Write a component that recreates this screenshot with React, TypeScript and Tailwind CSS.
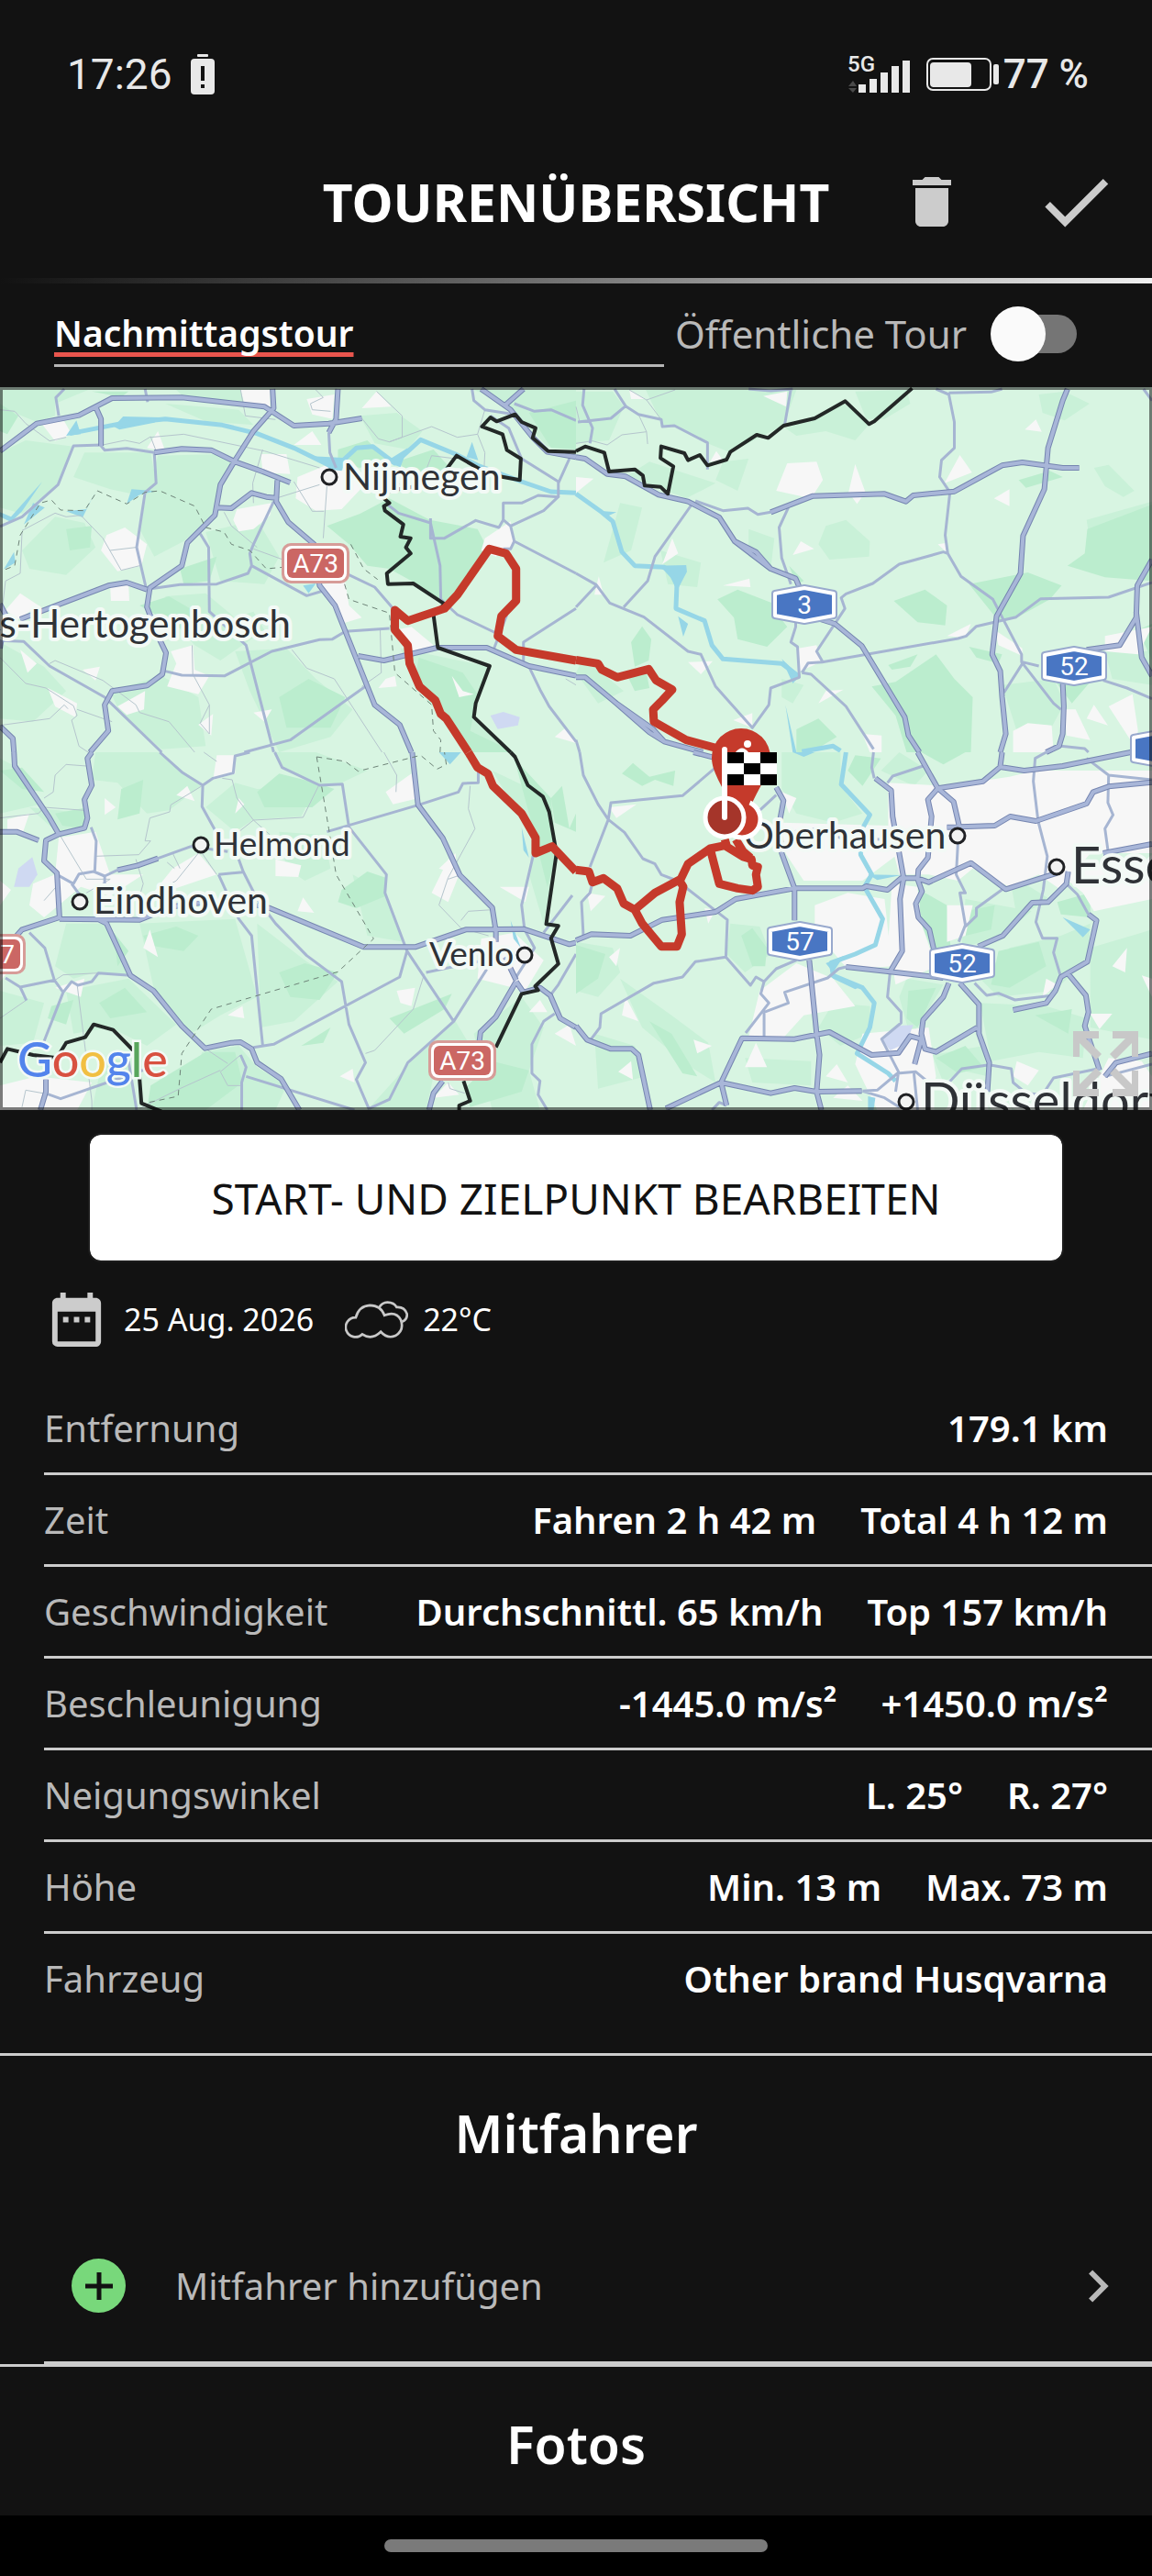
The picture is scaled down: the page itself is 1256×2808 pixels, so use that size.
import { useState } from 'react'
import { MdCheck, MdChevronRight, MdDateRange, MdDelete } from 'react-icons/md'

interface Tile {
  x: number
  y: number
  mid: string
  dark: string
  urban: string
  lake: string
  water: string
  river: string
  minor: string
  roads: string
  motorways: string
  border: string
  dashed: string
}

// Each tile covers 628x400 map units and is drawn on a 1568x1200 grid.
const TILES: Tile[] = [
  {
    x: 0,
    y: 0,
    mid: 'M0 15 240 15 150 60 150 100 100 120 40 90 0 110Z M480 15 730 15 735 70 500 38Z M0 220 70 180 200 200 160 320 60 420 0 400Z M230 220 410 220 425 320 380 360 300 340 200 300Z M430 230 600 225 640 255 600 330 590 420 500 510 420 560 380 470 400 350Z M450 60 650 80 690 130 560 118Z M1290 15 1568 15 1568 200 1490 200 1420 110 1380 60Z M980 100 1080 90 1150 150 1110 210 1020 190Z M450 690 560 680 640 760 690 740 720 800 600 900 530 850 470 770Z M0 840 120 920 180 1000 90 1100 0 1090Z M640 870 780 860 860 960 960 1060 900 1150 760 1200 680 1000Z M1090 860 1330 920 1290 1080 1390 1200 1280 1200 1130 980Z M300 1000 440 950 540 1020 560 1180 440 1190 330 1080Z M60 540 150 430 230 450 260 530 180 620 80 600Z M560 480 700 440 760 560 720 650 600 640Z',
    dark: 'M890 460 980 420 1060 370 1170 440 1300 470 1330 540 1250 680 1200 715 1120 640 1060 600 1000 590 950 520Z M920 210 1000 180 1050 240 980 270 920 255Z M1140 890 1260 940 1300 1010 1280 1130 1400 1200 1290 1200 1200 1060 1130 960Z M1440 90 1568 50 1568 210 1500 205Z M490 600 590 560 570 640 500 650Z M180 470 250 460 245 530 190 540Z M760 1020 840 960 940 1020 900 1120 780 1120Z M250 20 350 20 330 38Z M1080 250 1180 210 1240 290 1130 300Z M0 60 50 100 20 160 0 150Z M380 720 460 690 560 760 500 800Z',
    urban: 'M110 120 175 118 195 160 150 182Z M290 490 340 465 400 520 385 590 320 608 275 540Z M810 300 890 260 985 300 985 335 930 405 860 410 805 370Z M645 405 740 385 735 425 690 470 650 478 635 440Z M1320 500 1390 445 1400 520 1350 560 1310 540Z M465 870 525 850 530 930 570 950 540 1010 455 985 480 910Z M55 680 105 720 50 765 15 735Z M300 655 350 650 352 705 302 705Z M710 225 780 225 790 290 715 285Z M320 1050 395 1000 392 1060 345 1078Z M130 990 210 1040 205 1085 150 1050Z M55 865 100 910 75 940Z M540 1110 580 1075 575 1145Z M870 650 940 645 950 720 985 760 930 780Z M985 75 1025 20 1065 70Z M835 45 910 30 905 110 850 95Z M800 195 850 150 875 195Z M655 15 735 15 735 70 665 60Z M1075 800 1120 790 1180 850 1130 880Z M1050 960 1075 950 1080 985 1030 990Z M225 930 272 920 260 965Z M690 1070 740 1060 720 1100Z M400 205 430 150 450 215Z M1230 950 1260 1000 1290 1010 1250 1020Z M1510 1150 1540 1120 1568 1170Z',
    lake: 'M1335 1080 1370 1068 1415 1085 1410 1112 1355 1124Z',
    water: 'M180 165 208 115 220 160Z M310 135 335 102 440 105 420 122 325 145Z M1285 185 1302 245 1270 235Z M850 232 945 238 930 280 900 275Z M1050 250 1110 205 1090 268Z M0 415 30 430 115 315 60 412 30 447 0 430Z M65 455 90 385 122 400Z M180 412 235 405 262 342 225 432Z M345 388 358 340 425 346 380 358Z M10 602 38 545 42 580Z M825 655 860 648 840 680Z',
    river: 'M190 158 330 125 450 110 605 130 700 158 800 205 890 258 930 250 970 205 1015 200 1075 255 1145 178 1240 225 1300 262 1420 315 1500 348 1568 352',
    minor: 'M0 80 40 85 70 125 135 182 180 170 M655 15 668 100 750 112 M860 15 880 40 845 60 850 80 900 85 M1025 20 1095 100 1095 170 1060 185 1030 175 985 108 M1060 185 1175 135 1245 170 1300 160 1320 80 M1300 160 1320 220 1318 270 M410 170 500 160 720 215 870 270 M280 195 340 180 380 190 410 168 425 215 M60 480 55 615 15 640 5 740 M60 475 150 418 180 430 220 425 280 500 330 605 380 590 M300 540 370 530 M610 415 630 460 700 530 M690 535 770 570 M715 210 688 320 690 385 M890 330 880 500 M750 370 870 325 M800 315 850 412 882 412 M0 890 70 975 125 990 200 1048 210 1080 195 1095 215 1180 240 1200 M135 910 150 900 280 965 370 1045 380 1070 460 1100 530 1200 M525 945 570 1045 545 1105 570 1140 570 1045 M795 865 835 925 910 960 1040 1200 M525 950 523 850 M1035 800 1038 940 985 985 M0 1112 135 1090 175 1045 185 1058 M210 1060 305 1100 M1080 320 1140 340 1175 230 1240 240 M1568 980 1540 960',
    roads: 'M175 12 152 40 160 100 M395 12 402 55 M275 198 285 212 345 206 420 220 425 320 395 350 372 530 398 665 M275 195 200 198 158 325 60 430 0 462 M895 155 898 220 915 270 M545 485 568 530 570 740 670 850 745 1200 M410 665 490 652 590 650 675 615 685 590 835 688 880 672 M745 380 690 520 680 550 685 590 M450 935 495 948 612 950 740 870 870 832 905 830 940 805 1060 795 M0 835 65 838 135 918 285 1020 440 1200 M665 1200 790 1160 1000 980 M1055 390 1085 418 1172 450 1198 590 1200 700 1245 750 1350 810 M1172 435 1172 500 1210 500 1295 442 1358 465 1370 440 1370 385 1420 385 1465 360 1520 365 1520 315 1420 240 1385 140 1335 100 M1370 440 1390 460 1480 410 1522 362 M1390 460 1400 510 1568 615 M1400 510 1390 535 1370 535 M1520 320 1550 240 M1285 12 1290 50 1320 80 1400 95 M1400 60 1455 85 1500 80 1568 115 M1345 860 1380 750 M1425 905 1425 840 1568 730 M1440 920 1470 995 1495 1050 1568 1165 M950 620 1020 660 1070 730',
    motorways: 'M0 215 100 125 215 98 305 42 495 40 720 70 800 132 895 125 985 108 M742 12 745 75 690 150 640 245 600 325 585 425 510 515 495 590 408 662 400 725 430 820 452 875 442 945 400 982 305 1000 285 1045 295 1130 245 1200 M920 12 915 110 895 155 M420 220 495 208 575 212 640 250 715 282 790 318 M755 310 752 380 785 448 855 520 870 655 912 720 1020 1045 1088 1110 1120 1200 M590 400 630 402 685 352 725 365 750 368 M0 715 15 750 0 860 M55 765 295 655 345 645 400 668 M975 885 1045 900 1190 858 1325 858 1440 918 1568 950 M1310 12 1390 80 1450 170 1490 218 1568 235 M1425 12 1375 65 M0 1115 35 1155 38 1200 M262 75 275 110 275 198',
    border: 'M1568 218 1492 215 1450 172 1458 140 1420 120 1402 95 1352 118 1335 105 1312 135 1368 160 1380 212 1418 240 1415 310 1360 298 1300 270 1243 230 1215 275 1180 320 1060 345 1045 370 1060 385 1045 395 1048 410 1098 455 1090 495 1118 500 1105 530 1118 550 1053 615 1056 650 1125 648 1210 715 1180 750 1192 858 1333 918 1295 1040 1290 1085 1390 1200',
    dashed: 'M15 602 40 590 55 490 110 385 140 375 165 408 230 410 265 345 345 388 395 350 435 345 530 395 560 465 610 480 630 520 680 540 725 600 770 595 M955 520 990 600 1028 635 M938 650 950 700 1060 745 1075 940 1175 1045 1180 1130 1200 1160 1198 1200',
  },
  {
    x: 628,
    y: 0,
    mid: 'M190 15 600 15 565 130 420 220 358 190 268 132 235 130Z M0 20 100 20 130 70 90 180 0 190Z M570 140 660 105 730 60 800 125 760 180 680 150 600 165Z M760 20 900 15 910 60 840 110 790 110Z M660 520 680 460 735 440 800 510 798 560 690 570Z M1260 30 1330 20 1398 60 1330 115 1270 90Z M380 310 400 250 470 240 440 345Z M75 580 120 385 180 400 150 540Z M470 470 540 500 530 600 470 560Z M1410 270 1450 260 1520 345 1490 365 1440 330Z M1390 440 1568 380 1568 450 1400 520Z M230 540 340 580 330 660 250 650Z M380 320 300 370 140 295 200 250Z M1160 980 1300 960 1330 1040 1280 1150 1200 1130Z M20 890 130 1000 60 1040 0 940Z M560 960 620 980 590 1040 560 1020Z M1440 870 1568 870 1568 980 1460 960Z',
    dark: 'M385 700 440 668 540 715 550 750 575 790 520 855 440 830 430 760Z M865 705 950 668 1010 720 1005 785 930 775Z M805 985 870 970 980 880 1030 960 1080 1020 1075 1200 900 1200 870 1080Z M1070 650 1230 612 1322 655 1290 700 1200 760 1150 770Z M1392 470 1568 390 1568 640 1440 628 1338 590 1385 550Z M150 840 180 788 205 830 198 900 160 920Z M1205 310 1290 280 1325 300 1225 335Z M600 1125 660 1090 710 1150 640 1200 600 1200Z M850 915 930 880 910 920 860 930Z M1070 855 1160 880 1150 910 1090 890Z M140 950 190 930 200 990 160 1000Z M580 590 620 640 600 650Z M1300 960 1400 970 1350 1040Z M1530 800 1568 780 1568 900Z',
    urban: 'M575 255 655 250 672 310 640 370 545 345Z M760 258 788 350 765 388 742 350Z M1045 228 1078 285 1003 320Z M590 555 612 510 648 535Z M235 585 262 500 278 550Z M400 655 472 632 475 660Z M605 860 655 850 665 905 610 935Z M510 35 575 20 572 70Z M1222 145 1252 112 1268 152Z M1138 370 1180 340 1180 395Z M0 300 48 305 0 352Z M305 905 372 902 340 945Z M660 1040 680 1000 728 995Z M1190 1130 1230 1105 1295 1112 1300 1200 1190 1200Z M1450 1050 1515 1010 1530 1130 1520 1180Z M1330 1060 1360 1060 1400 1160 1335 1145Z M1390 1090 1410 1045 1448 1112Z M1440 820 1568 790 1530 880 1440 870Z M1140 800 1215 860 1215 885 1150 850Z M428 1095 480 1072 480 1120Z M780 1140 832 1145 832 1200 800 1200Z M1010 820 1075 780 1060 825Z M145 15 190 45 150 45Z M985 520 1010 515 1012 550Z M50 685 62 625 75 685Z M365 250 382 215 400 245Z',
    lake: '',
    water: 'M215 590 300 588 302 610 275 672 250 610Z M278 755 305 780 292 822Z M570 1045 600 1200 590 1200Z M60 410 110 415 85 428Z M560 895 610 950 590 975Z',
    river: 'M0 355 70 415 100 445 125 545 160 590 240 595 275 640 272 730 350 770 370 850 400 895 560 910 605 950 M615 1198 700 1180 720 1195',
    minor: 'M145 15 192 48 270 15 M192 48 232 112 M170 95 192 152 195 192 M0 190 45 182 85 195 125 162 192 152 M0 70 10 120',
    roads: 'M105 12 135 68 95 108 5 120 M135 68 170 95 232 112 235 135 268 132 358 188 358 275 M22 12 18 65 45 140 38 190 M585 12 568 130 M315 390 215 560 195 640 130 725 M0 615 55 652 92 712 185 758 305 870 340 880 380 985 480 1120 525 1045 530 990 608 955 603 855 585 840 598 790 598 770 M55 655 0 725 M325 378 400 410 468 402 495 422 530 415 M578 400 553 465 560 565 585 650 M980 12 1015 30 1030 120 1030 205 995 245 990 300 1018 350 1005 490 1012 550 1048 625 1135 700 1165 770 1213 880 1213 905 1300 1040 1320 1060 M1015 25 1130 22 1160 12 M1012 550 1000 545 880 585 808 648 735 682 722 695 732 730 655 870 672 905 M615 940 632 908 670 905 1040 828 1062 820 1090 788 1198 758 1265 698 1450 693 1568 645 M615 940 640 945 735 1050 810 1190 M1218 905 1165 1005 M1215 905 1260 918 M1435 965 1500 990 1568 1025 M1545 12 1568 50 M470 12 530 18 590 12 M0 1160 10 1200 M1320 1180 1385 1188 1395 1200',
    motorways: 'M0 235 25 240 85 290 135 298 225 358 305 380 390 432 432 510 530 600 598 632 608 660 M432 510 490 545 530 600 M665 765 705 780 778 852 895 1085 905 1145 935 1200 M1338 12 1325 50 1285 205 1275 340 1217 492 1210 615 1145 755 1133 880 1155 935 1160 1020 1170 1140 1155 1200 M530 415 645 362 840 355 898 380 918 360 1030 347 1160 262 1215 252 1325 270 1370 270 M1568 570 1528 655 1525 760 1480 850 1390 865 M1525 740 1540 890 1568 950 M1325 975 1328 1050 1325 1140 1315 1180 1280 1200 M0 955 25 955 110 1040 200 1135 240 1165 345 1200 M110 1040 210 1125 240 1165',
    border: 'M915 10 812 118 798 127 733 52 650 108 565 132 523 172 492 162 420 218 410 243 358 262 337 228 305 245 295 222 232 200 230 238 265 265 250 355 230 332 187 328 182 295 160 275 90 282 77 220 25 200 0 215',
    dashed: '',
  },
  {
    x: 0,
    y: 400,
    mid: 'M0 20 40 45 110 170 0 200Z M260 0 430 0 550 108 460 190 400 200 320 100 250 90Z M560 180 640 100 700 120 860 110 820 210 690 220 640 260Z M750 0 860 0 1000 60 930 100 870 108 768 50Z M180 560 280 560 355 730 260 720 200 740 150 700Z M380 560 640 545 700 800 600 860 520 920 420 780Z M180 780 350 740 480 890 400 960 300 900 200 920Z M0 780 120 820 90 950 0 960Z M700 560 830 680 920 750 800 880 710 900Z M960 400 1050 460 1100 620 1000 600Z M1340 60 1480 140 1515 330 1480 560 1440 400 1450 280Z M550 980 650 960 700 1030 780 1090 750 1170 500 1170Z M1000 1170 1120 1010 1240 880 1300 1000 1180 1060 1160 1170Z M1290 920 1420 800 1480 900 1440 1040 1470 1170 1340 1170Z M760 260 880 270 900 380 830 420 780 380Z M280 1000 350 1010 370 1170 250 1170Z M80 180 240 200 230 250 160 268Z',
    dark: 'M700 130 760 70 860 100 910 120 850 180 720 180Z M930 450 1000 390 1050 410 1050 470 970 510 920 490Z M390 600 480 570 540 600 500 650 400 630Z M760 720 830 690 920 720 870 810 790 800Z M1400 20 1500 150 1515 330 1490 440 1440 200Z M1500 150 1530 110 1550 250 1568 200 1568 260 1510 230Z M410 1090 560 980 640 980 660 1080 560 1170 400 1170Z M270 820 340 770 400 850 300 870Z M0 60 60 50 120 130 60 120Z M1060 870 1230 790 1210 840 1100 920Z M310 590 350 650 320 700Z M1265 1100 1340 1010 1440 1040 1420 1110 1280 1160Z M150 200 240 180 230 250 170 240Z M820 960 900 900 880 950Z M330 120 390 90 380 200 320 220Z M140 830 200 810 180 890 130 870Z',
    urban: 'M160 280 260 260 300 400 390 400 300 470 220 440 120 540 80 500 90 430 150 400Z M590 10 640 10 640 70 580 90Z M470 380 540 330 590 400 490 440 410 470Z M750 350 820 370 812 408 750 405Z M20 220 80 200 60 270 20 260Z M1050 130 1120 70 1140 150 1070 170Z M1175 460 1220 350 1250 400 1220 490Z M1310 610 1400 590 1480 680 1430 780 1300 740Z M1360 440 1440 440 1430 490Z M390 640 408 580 430 670Z M285 150 315 180 285 205Z M480 140 510 110 530 160Z M810 520 825 475 855 525Z M0 1090 100 1060 250 1080 210 1170 0 1170Z M150 770 230 740 220 800Z M1080 780 1130 770 1120 830 1090 820Z M1440 850 1470 810 1490 850Z M925 1060 960 1035 965 1080Z M1180 1130 1220 1080 1250 1120Z M0 680 20 720 0 750Z M1510 920 1550 890 1568 960Z M1195 380 1240 330 1245 400Z M650 150 640 200 665 170Z M0 420 30 450 0 500Z M620 860 660 830 665 870Z',
    lake: 'M38 440 50 380 88 343 102 400 80 440Z',
    water: 'M1195 0 1255 0 1225 40Z M1420 245 1440 345 1425 320Z M1390 550 1418 640 1398 610Z',
    river: '',
    minor: 'M0 215 105 200 120 180 230 190 M120 150 145 130 150 75 180 40 235 45 M550 110 465 172 462 195 408 215 395 290 410 290 378 335 260 340 M605 85 632 90 645 150 690 222 735 270 M690 222 825 213 868 108 M690 222 640 270 M550 330 590 400 M540 330 480 420 420 460 M165 275 235 415 300 415 235 460 M120 485 160 430 M370 350 390 430 380 470 M455 360 475 380 M470 330 490 380 M210 760 250 1140 250 1170 M1045 0 1080 75 1078 130 M1280 110 1275 185 1293 250 1220 410 1195 500 1255 575 1330 600 M1220 415 1252 402 M1275 520 1340 515 M1255 550 1275 520 M1155 725 1125 840 1020 975 995 985 M0 870 70 812 M655 990 600 1045 620 1090 655 1090 M380 1165 490 1100 600 1040 M560 970 620 1018 M60 1160 70 1105 130 1118 M150 745 172 728 268 722 M555 0 590 30 M1220 1080 1225 1100 1265 1115',
    roads: 'M430 347 520 308 620 325 M435 0 495 65 552 108 550 178 590 265 M552 108 580 85 635 68 640 12 680 0 M748 0 768 50 870 108 932 104 950 245 1052 400 1048 460 1108 650 1235 880 M650 350 662 390 700 480 750 560 835 665 930 750 950 890 995 1015 970 1070 1005 1168 M595 400 660 392 M595 400 650 545 685 600 715 958 M890 260 1140 172 1248 130 1260 102 1302 100 1302 60 M690 965 745 955 1088 735 1108 650 M1160 720 1320 680 M1325 710 1235 880 1110 1015 1060 1135 1005 1165 M655 990 670 1030 658 1080 658 1170 M670 1060 965 1170 M80 590 122 640 148 745 172 785 120 945 M15 738 55 768 150 745 M55 768 72 812 M172 785 195 750 212 762 250 750 268 722 355 730 M130 1118 165 1133 400 1035 M350 1010 372 1170 M155 400 200 430 215 398 255 390 285 405 320 385 M248 245 262 290 258 390 M195 430 225 480 M285 405 285 440 M1452 335 1420 500 1428 580 1455 640 1400 745 M1480 590 1558 468 M1568 660 1520 760 1498 795 M1510 855 1480 880 1448 955 1448 1050 1470 1075 1465 1120 1490 1170',
    motorways: 'M38 0 40 45 135 215 160 268 230 248 238 215 230 155 250 108 238 20 250 0 M0 260 45 260 105 288 M160 268 125 288 120 355 155 395 162 540 60 580 45 600 M162 545 380 548 470 505 560 490 M270 548 290 560 355 730 418 780 495 895 558 968 630 950 655 948 685 970 700 1015 765 1068 815 1170 M700 500 735 510 990 637 1130 637 1268 580 1425 578 1500 608 1550 628 1568 622 M1122 0 1138 172 1205 280 1252 402 1340 508 1350 585 1350 620 M320 385 375 370 430 347 M1405 750 1350 865 1308 915 1305 945 M1205 1075 1180 1115 1168 1170 M1405 750 1425 785 1470 770 1498 795 1525 870 1568 900 M1375 670 1405 745 M125 1070 125 1110 110 1170',
    border: 'M1390 0 1402 15 1437 108 1478 145 1495 195 1515 330 1487 562 1520 568 1500 608 1520 692 1457 765 1465 778 1420 790 1350 965 M1262 1075 1280 1140 1250 1155 1250 1170 M0 1015 20 970 90 990 155 1000 180 950 232 932 255 890 308 908 375 990 385 1148 440 1175',
    dashed: 'M862 15 940 30 975 62 1145 10 1190 55 1215 40 1210 0 M862 15 895 250 915 400 1017 610 920 718 575 840 495 985 485 1125 385 1150',
  },
  {
    x: 628,
    y: 400,
    mid: 'M560 0 720 0 720 110 780 200 700 230 600 200 560 120Z M0 620 100 640 120 720 60 800 0 780Z M420 560 500 570 530 660 460 720 410 660Z M120 740 260 860 360 950 380 1080 300 1020 180 900Z M900 740 1000 760 940 880 910 930 880 800Z M1060 480 1240 520 1160 600 1050 640Z M1180 640 1320 600 1400 560 1395 680 1300 780 1150 800 1100 740Z M1180 400 1290 480 1200 540Z M1100 820 1280 830 1390 870 1380 1000 1260 980 1130 1010Z M970 990 1110 960 1120 1060 1050 1040 1000 1080Z M1400 640 1568 580 1568 940 1400 900Z M700 820 800 830 800 920 720 960 660 900Z M460 1000 640 1010 640 1090 480 1080Z M880 0 960 60 920 110 830 60Z M50 920 160 960 190 1060 60 1100Z M1060 130 1180 110 1230 200 1060 230Z',
    dark: 'M125 70 155 35 200 80 270 60 265 110 215 90 180 110Z M760 10 830 20 780 110 740 60Z M450 600 480 575 520 640 515 700 480 700Z M0 630 80 660 60 740 0 790Z M200 880 260 920 330 1060 290 1050Z M920 440 1010 500 1020 640 970 650 930 530Z M1060 520 1140 500 1130 580 1060 600Z M905 780 980 770 930 900 900 870Z M1150 650 1260 620 1280 700 1180 770 1130 760Z M980 1000 1060 960 1110 1030 1040 1050Z M1310 490 1400 460 1400 540 1320 530Z M1250 860 1350 840 1340 920Z M1400 150 1500 160 1440 200Z M940 0 1060 0 1000 40Z',
    urban: 'M850 100 1010 110 1180 80 1250 60 1568 60 1568 330 1400 330 1320 450 1260 400 1180 440 1080 380 1040 420 960 400 880 400 850 260Z M650 500 740 460 840 480 860 700 740 710 690 640 650 560Z M860 430 930 440 940 560 980 700 870 760 850 620Z M560 230 850 240 880 330 780 420 620 420 570 330Z M500 780 600 690 700 740 760 830 620 860 560 940 470 930Z M780 920 960 900 980 1060 960 1170 820 1170 760 1020Z M1010 500 1080 500 1060 600 1010 620Z M1300 380 1568 350 1568 480 1410 520 1380 460Z M90 180 165 170 110 215Z M30 460 80 470 40 520Z M125 860 135 800 170 880Z M115 1045 150 1010 155 1070Z M460 1030 490 950 520 1030Z M320 940 370 960 330 985Z M680 1060 710 1020 740 1080Z M90 670 120 640 110 700Z M1400 855 1460 855 1425 905Z M1460 700 1500 640 1495 720Z M1540 730 1568 740 1568 800Z M1200 1010 1260 1040 1230 1090 1190 1060Z M700 1130 740 1090 780 1140Z M1280 740 1310 760 1270 800Z M560 130 600 150 580 200Z M1450 1000 1540 1010 1568 1060 1568 1170 1380 1170Z M350 510 380 515 360 560Z M1000 200 1020 170 1040 240Z',
    lake: 'M832 938 870 895 918 892 900 950 855 975Z',
    water: 'M680 690 730 665 700 720Z M1325 540 1400 580 1380 605Z M590 0 650 0 620 15Z M795 400 885 402 820 418Z M690 725 780 765 760 775 700 740Z M795 1125 815 1130 810 1170 795 1170Z',
    river: 'M735 0 722 105 800 205 775 260 775 335 805 400 785 440 835 545 815 630 760 660 695 688 700 730 780 770 812 820 800 900 765 985 850 1050 870 1075',
    minor: '',
    roads: 'M10 0 20 75 60 170 88 220 132 262 182 348 215 365 232 400 275 420 412 548 408 670 475 762 490 735 512 750 545 708 600 680 M380 50 290 142 95 165 88 220 38 375 M45 425 38 460 15 490 20 600 M408 670 325 685 290 735 212 755 68 855 65 900 40 940 M512 750 503 790 525 820 462 918 M512 850 512 930 M512 850 578 820 568 785 685 738 715 708 735 702 M810 0 805 50 812 85 M848 100 862 78 945 45 M1280 0 1250 20 1245 95 1258 225 1283 340 1272 450 1252 555 1270 608 1310 608 1300 655 1320 735 M1040 290 1035 400 1060 460 1045 460 1060 565 1042 620 M1165 445 1090 510 1090 535 1060 570 M1390 20 1450 75 1448 165 1462 205 1440 250 1448 320 M1450 75 1568 90 M1335 430 1365 465 1395 530 M855 718 848 800 885 850 885 885 832 938 878 1045 870 1110 M1085 755 1118 795 1150 788 1195 810 1300 795 M1015 1080 1050 1035 1125 1022 1185 1035 1190 1080 1225 1115 1270 1120 1300 1065 1420 1035 M780 1108 820 1105 875 1050 925 1045 960 1080 M780 1108 840 1130 880 1160 M500 190 545 140 M370 1170 390 1145 410 1155 M1440 1060 1568 1020 M590 260 660 250 720 280 830 285 M920 1050 930 1170',
    motorways: 'M545 115 565 158 553 235 560 330 595 445 595 550 M635 680 655 920 663 990 655 1110 668 1170 M0 615 42 595 148 600 235 548 380 522 435 480 595 445 780 445 790 438 848 450 885 412 930 412 960 425 1075 362 1170 448 1310 395 M815 85 858 125 862 210 892 412 882 480 888 650 855 718 M735 702 855 718 1000 738 M930 0 985 118 958 155 968 210 958 345 932 385 930 415 942 455 925 495 932 540 962 580 975 650 M985 118 1028 162 1043 240 M985 118 1108 95 1155 48 1220 60 1325 45 1510 0 M1155 45 1160 0 M1010 245 1140 240 1182 210 1252 225 1390 168 1408 130 1450 112 1568 98 M1340 390 1335 430 1285 490 1242 492 1162 600 1095 635 M1395 530 1417 550 1392 685 1320 735 1305 780 1280 820 1190 843 M1340 725 1388 795 1395 850 1385 895 1425 1040 M1015 755 1000 800 945 875 940 920 950 970 980 980 1092 900 M1045 755 1097 825 1097 920 1125 1015 1120 1110 M0 895 30 940 95 970 152 970 170 990 202 1170 M245 1165 395 1080 530 1115 595 1098 655 1110 778 1108 M395 1080 452 935 595 938 690 915 805 990 878 983 910 928 940 938 922 1020 M395 1080 410 1155 M320 0 400 25 M1435 330 1568 300 M1440 1060 1470 1015 1568 985',
    border: '',
    dashed: '',
  },
]

// Recorded track, one segment per tile.
const ROUTE = [
  'M1568 900 1405 865 1355 820 1365 755 1405 705 1405 600 1378 550 1332 535 1245 685 1210 730 1110 770 1075 735 1075 800 1110 850 1115 910 1142 985 1185 1030 1200 1075 1215 1090 1275 1200',
  'M0 898 60 910 70 930 112 955 198 928 218 965 262 995 235 1030 210 1060 212 1100 300 1160 400 1192',
  'M1275 0 1300 50 1328 70 1342 110 1420 200 1458 280 1458 330 1503 308 1568 390',
  'M0 385 35 390 45 425 75 412 112 445 130 495 160 515 215 460 285 415 305 365 365 315 405 305 455 342 478 350 480 370 495 375 490 400 495 440 480 452 440 445 390 430 365 315 M160 515 180 560 232 635 275 635 288 595 282 490 292 440 282 420 M410 305 405 285 M435 285 455 325 475 345',
]

const CITIES = [
  { name: 'Nijmegen', x: 374, y: 114, size: 41, dotX: 359, dotY: 100 },
  { name: 'Helmond', x: 233, y: 513, size: 37, dotX: 219, dotY: 501 },
  { name: 'Eindhoven', x: 102, y: 576, size: 41, dotX: 87, dotY: 563 },
  { name: 'Venlo', x: 468, y: 633, size: 37, dotX: 572, dotY: 621 },
  { name: 'Oberhausen', x: 811, y: 505, size: 41, dotX: 1044, dotY: 491 },
  { name: 'Essen', x: 1168, y: 543, size: 56, dotX: 1152, dotY: 525 },
  { name: 'Düsseldorf', x: 1004, y: 800, size: 56, dotX: 988, dotY: 781 },
]

const AUTOBAHN = [
  { label: '3', x: 877, y: 239 },
  { label: '52', x: 1171, y: 306 },
  { label: '57', x: 872, y: 606 },
  { label: '52', x: 1049, y: 630 },
  { label: '', x: 1268, y: 396 },
]

const SNELWEG = [
  { label: 'A73', x: 344, y: 194 },
  { label: 'A73', x: 504, y: 736 },
  { label: 'A67', x: -9, y: 620 },
]

const GOOGLE = [
  { char: 'G', color: '#5384ec' },
  { char: 'o', color: '#d85140' },
  { char: 'o', color: '#f1bf42' },
  { char: 'g', color: '#5384ec' },
  { char: 'l', color: '#58a55c' },
  { char: 'e', color: '#d85140' },
]

const STATS = [
  { label: 'Entfernung', values: ['179.1 km'] },
  { label: 'Zeit', values: ['Fahren 2 h 42 m', 'Total 4 h 12 m'] },
  { label: 'Geschwindigkeit', values: ['Durchschnittl. 65 km/h', 'Top 157 km/h'] },
  { label: 'Beschleunigung', values: ['-1445.0 m/s²', '+1450.0 m/s²'] },
  { label: 'Neigungswinkel', values: ['L. 25°', 'R. 27°'] },
  { label: 'Höhe', values: ['Min. 13 m', 'Max. 73 m'] },
  { label: 'Fahrzeug', values: ['Other brand Husqvarna'] },
]

function tileTransform(x: number, y: number) {
  return `translate(${x} ${y}) scale(0.4005 0.33333)`
}

function Line({ d, color, width, dash }: { d: string; color: string; width: number; dash?: string }) {
  if (!d) return null
  return (
    <path
      d={d}
      fill="none"
      stroke={color}
      strokeWidth={width}
      strokeDasharray={dash}
      strokeLinejoin="round"
      vectorEffect="non-scaling-stroke"
    />
  )
}

function MapPins() {
  return (
    <g>
      <path d="M776 406a32 32 0 0 1 64 0c0 18-16 36-24 60h-16c-8-24-24-42-24-60z" fill="#c53a2b" />
      <circle cx="809" cy="473" r="20" fill="#c53a2b" stroke="#fff" strokeWidth="5" />
      <path d="M790 430h38l-16 38h-22z" fill="#c53a2b" />
      <circle cx="815" cy="391" r="4" fill="#fff" />
      <path d="M802 400q7-9 14 0z" fill="#fff" />
      <circle cx="790" cy="471" r="21" fill="#a5352a" stroke="#fff" strokeWidth="5" />
      <path d="M790 397v74" stroke="#fff" strokeWidth="6" strokeLinecap="round" />
      <rect x="793" y="400" width="54" height="36" fill="#000" />
      <path d="M811 400h18v12h-18zM793 412h18v12h-18zM829 412h18v12h-18zM811 424h18v12h-18z" fill="#fff" />
    </g>
  )
}

function TourMap() {
  return (
    <section className="relative w-full overflow-hidden" aria-label="Karte">
      <svg
        viewBox="0 2 1256 788"
        preserveAspectRatio="xMidYMid slice"
        className="block w-full h-[788px] bg-[#d8f5e2]"
      >
        {TILES.map((t) => (
          <g key={`${t.x}-${t.y}`} transform={tileTransform(t.x, t.y)}>
            <path d={t.mid} fill="#c9f1d8" />
            <path d={t.dark} fill="#bbedce" />
            <path d={t.urban} fill="#f7f7f7" />
            {t.lake && <path d={t.lake} fill="#cfd9f2" />}
            <path d={t.water} fill="#96d6e7" />
            <Line d={t.river} color="#96d6e7" width={5} />
            <Line d={t.minor} color="#b5c5cd" width={1} />
            <Line d={t.roads} color="#a6b5d2" width={3} />
            <Line d={t.motorways} color="#7585b0" width={6} />
            <Line d={t.motorways} color="#a8b6d8" width={4} />
            <Line d={t.dashed} color="#6e8378" width={1} dash="6 5" />
            <Line d={t.border} color="#232827" width={4} />
          </g>
        ))}
        <g className="font-['Lato']" fill="#2f3237" stroke="#f3faf6" strokeWidth="8" strokeLinejoin="round">
          <text x="317" y="275" fontSize="42" textAnchor="end" style={{ paintOrder: 'stroke' }}>
            s-Hertogenbosch
          </text>
          {CITIES.map((c) => (
            <text key={c.name} x={c.x} y={c.y} fontSize={c.size} style={{ paintOrder: 'stroke' }}>
              {c.name}
            </text>
          ))}
        </g>
        {CITIES.map((c) => (
          <circle key={c.name} cx={c.dotX} cy={c.dotY} r="8" fill="#f2f2f2" stroke="#202124" strokeWidth="3" />
        ))}
        {TILES.map((t, i) => (
          <g key={i} transform={tileTransform(t.x, t.y)}>
            <Line d={ROUTE[i]} color="#c53a2b" width={9} />
          </g>
        ))}

        {SNELWEG.map((s, i) => (
          <g key={i} transform={`translate(${s.x} ${s.y})`}>
            <rect x="-37" y="-22" width="74" height="44" rx="10" fill="#d79c98" />
            <rect x="-34" y="-19" width="68" height="38" rx="8" fill="#fff" />
            <rect x="-31" y="-16" width="62" height="32" rx="6" fill="#cb6764" />
            <text y="10" fontSize="28" textAnchor="middle" fill="#fff" className="font-['Roboto']">
              {s.label}
            </text>
          </g>
        ))}
        {AUTOBAHN.map((s, i) => (
          <g key={i} transform={`translate(${s.x} ${s.y})`} strokeLinejoin="round">
            <path d="M-32-12 0-18 32-12V12L0 18-32 12Z" fill="#98a9cd" stroke="#98a9cd" strokeWidth="8" />
            <path d="M-32-12 0-18 32-12V12L0 18-32 12Z" fill="#4976c3" stroke="#fff" strokeWidth="4" />
            {s.label && (
              <text y="10" fontSize="28" textAnchor="middle" fill="#fff" className="font-['Roboto']">
                {s.label}
              </text>
            )}
          </g>
        ))}

        <MapPins />

        <text
          x="19"
          y="754"
          fontSize="52"
          stroke="#f3faf6"
          strokeWidth="5"
          className="font-['Lato'] font-medium"
          style={{ paintOrder: 'stroke' }}
        >
          {GOOGLE.map((g, i) => (
            <tspan key={i} fill={g.color}>
              {g.char}
            </tspan>
          ))}
        </text>
      </svg>
      <div className="pointer-events-none absolute inset-0 border-[3px] border-black/50" />
      <button type="button" aria-label="Karte vergrößern" className="absolute right-[15px] bottom-[15px]">
        <svg viewBox="0 0 71 71" className="size-[71px]" fill="#c8c8c8">
          <path d="M0 0H28V8H14L31 25 25 31 7 13V28H0Z" />
          <path d="M71 0H43V8H57L40 25 46 31 64 13V28H71Z" />
          <path d="M0 71H28V63H14L31 46 25 40 7 58V43H0Z" />
          <path d="M71 71H43V63H57L40 46 46 40 64 58V43H71Z" />
        </svg>
      </button>
    </section>
  )
}

function StatusBar() {
  return (
    <div className="flex h-[137px] items-center justify-between pt-6 pr-[69px] pl-[73px] font-['Roboto'] text-[46px] leading-none text-[#e8e8e8]">
      <div className="flex items-center gap-5">
        <span>17:26</span>
        <svg viewBox="0 0 26 44" className="h-11 w-[26px]">
          <rect x="7" y="0" width="12" height="3" rx="1" fill="#e8e8e8" />
          <rect x="0" y="5" width="26" height="39" rx="4" fill="#e8e8e8" />
          <path d="M11 13h4v16h-4zM11 33h4v4h-4z" fill="#121212" />
        </svg>
      </div>
      <div className="flex items-center">
        <svg viewBox="0 -8 68 58" className="mr-[18px] h-[58px] w-[68px]" fill="#e8e8e8">
          <text x="0" y="18" fontSize="24" fontWeight="500">
            5G
          </text>
          <path d="M12 32h8v9h-8zM24 26h8v15h-8zM36 19h8v22h-8zM48 12h8v29h-8zM60 6h8v35h-8z" />
          <path d="M1 34l5-6 4 6zM1 36h9l-4 5z" fill="#4a4a4a" />
        </svg>
        <svg viewBox="0 0 80 36" className="mr-1 h-9 w-20">
          <rect x="1" y="1" width="69" height="34" rx="6" fill="none" stroke="#e8e8e8" strokeWidth="2" />
          <rect x="4" y="5" width="45" height="27" rx="4" fill="#e8e8e8" />
          <rect x="73" y="7" width="6" height="22" rx="2" fill="#e8e8e8" />
        </svg>
        <span className="text-[44px] font-medium">77 %</span>
      </div>
    </div>
  )
}

function CloudIcon() {
  return (
    <svg viewBox="0 0 208 122" className="h-[41px] w-[69px]" fill="none" stroke="#c8c8c8" strokeWidth="8">
      <path d="M36 54A32 32 0 1 0 57 109Q88 130 118 101Q140 125 166 114Q196 96 184 62Q168 32 130 47Q118 14 82 14Q46 16 36 54Z" />
      <path d="M112 22Q122 4 140 4Q162 4 170 20Q196 18 204 42Q206 60 188 68" />
    </svg>
  )
}

export default function App() {
  const [name, setName] = useState('Nachmittagstour')
  const [isPublic, setIsPublic] = useState(false)

  return (
    <div className="min-h-screen bg-[#121212] font-['Noto_Sans',sans-serif] text-white">
      <StatusBar />

      <header className="grid h-[166px] grid-cols-[1fr_auto_1fr] items-center">
        <h1 className="col-start-2 text-[57px] leading-none font-bold">TOURENÜBERSICHT</h1>
        <div className="flex items-center justify-between pr-9 pl-[76px] text-[#cccccc]">
          <button type="button" aria-label="Tour löschen">
            <MdDelete className="size-[72px]" />
          </button>
          <button type="button" aria-label="Speichern">
            <MdCheck className="size-[94px]" />
          </button>
        </div>
      </header>
      <div className="h-1.5 bg-linear-to-r from-[#121212] to-[#f0f0f0]" />

      <div className="flex h-[113px] items-center pr-[82px] pb-1 pl-[59px]">
        <input
          type="text"
          aria-label="Tourname"
          value={name}
          onChange={(e) => setName(e.target.value)}
          className="h-[73px] min-w-0 flex-1 border-b-[3px] border-[#b5b5b5] text-[39px] font-semibold underline decoration-[#e8554d] decoration-[6px] underline-offset-[6px] outline-none [text-decoration-skip-ink:none]"
        />
        <label htmlFor="public" className="ml-3 text-[42px] leading-none text-[#b9b9b9]">
          Öffentliche Tour
        </label>
        <input
          id="public"
          type="checkbox"
          role="switch"
          checked={isPublic}
          onChange={(e) => setIsPublic(e.target.checked)}
          className="relative ml-9 h-[42px] w-[84px] shrink-0 appearance-none rounded-full bg-[#757575] before:absolute before:-top-[9px] before:-left-[10px] before:size-[60px] before:rounded-full before:bg-[#fafafa] checked:before:left-[34px]"
        />
      </div>

      <TourMap />

      <div className="px-[98px] pt-[27px]">
        <button
          type="button"
          className="h-[137px] w-full rounded-xl bg-white text-[46px] leading-none text-[#121212] outline-2 outline-[#1c1c1c]"
        >
          START- UND ZIELPUNKT BEARBEITEN
        </button>
      </div>

      <div className="mb-1.5 flex h-32 items-center pl-12 text-[34px] leading-none">
        <MdDateRange className="size-[71px] text-[#cccccc]" />
        <span className="ml-4">25 Aug. 2026</span>
        <span className="mr-4 ml-[34px]">
          <CloudIcon />
        </span>
        <span>22°C</span>
      </div>

      <dl className="border-b-[3px] border-[#cccccc] pb-[33px]">
        {STATS.map((row) => (
          <div
            key={row.label}
            className="ml-12 flex h-[100px] items-center justify-between border-b-[3px] border-[#cccccc] pr-12 text-[40px] leading-none last:h-[97px] last:border-b-0"
          >
            <dt className="text-[#b9b9b9]">{row.label}</dt>
            <dd className="flex gap-12 font-semibold">
              {row.values.map((v) => (
                <span key={v}>{v}</span>
              ))}
            </dd>
          </div>
        ))}
      </dl>

      <section className="border-b-[3px] border-[#cccccc]">
        <h2 className="flex h-[168px] items-center justify-center text-[57px] leading-none font-semibold">Mitfahrer</h2>
        <button
          type="button"
          className="ml-12 flex h-[168px] w-[calc(100%-48px)] items-center border-b-[3px] border-[#cccccc] pr-6 pl-[30px] text-[40px] leading-none text-[#b9b9b9]"
        >
          <span className="flex size-[59px] items-center justify-center rounded-full bg-[#78d87b]">
            <svg viewBox="0 0 30 30" className="size-[30px]" stroke="#121212" strokeWidth="5">
              <path d="M15 0V30M0 15H30" />
            </svg>
          </span>
          <span className="ml-[54px]">Mitfahrer hinzufügen</span>
          <MdChevronRight className="ml-auto size-[70px]" />
        </button>
      </section>

      <section>
        <h2 className="flex h-[168px] items-center justify-center text-[57px] leading-none font-semibold">Fotos</h2>
      </section>

      <div className="fixed inset-x-0 bottom-0 flex h-[66px] items-center justify-center bg-black">
        <div className="h-3.5 w-1/3 rounded-full bg-[#7a7a7a]" />
      </div>
    </div>
  )
}
